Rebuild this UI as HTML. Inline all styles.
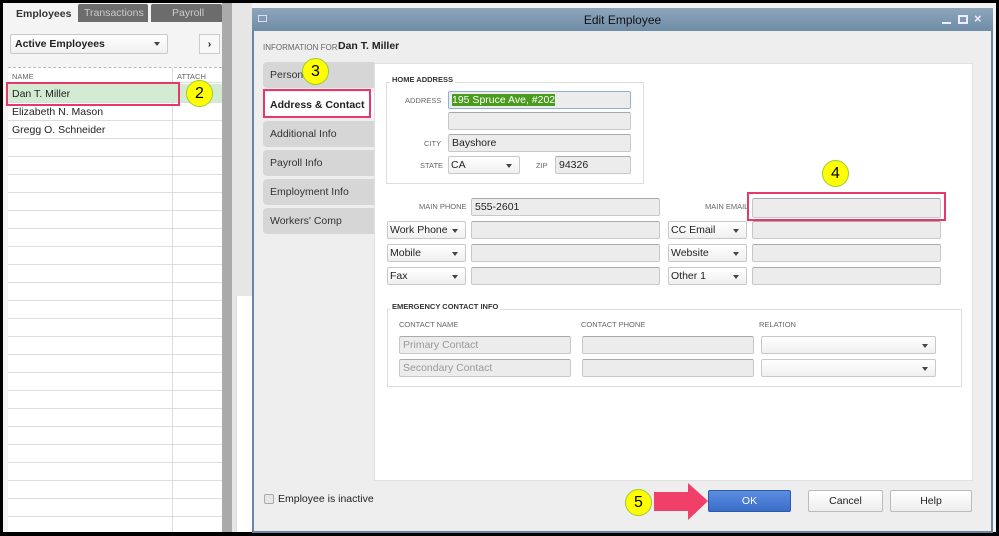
<!DOCTYPE html><html><head><style>
*{box-sizing:border-box;margin:0;padding:0}
body{width:999px;height:536px;overflow:hidden;background:#000;font-family:"Liberation Sans",sans-serif;font-size:10.5px;color:#222;position:relative;white-space:nowrap}
.a{position:absolute}
.inp{position:absolute;background:#ececec;border:1px solid #c8c8c8;border-top-color:#aaa;border-radius:2px;font-size:10.5px;padding:2px 3px;height:18px;overflow:hidden}
.dd{position:absolute;background:linear-gradient(#fff,#f0f0f0);border:1px solid #c8c8c8;border-radius:2px;font-size:10.5px;padding:2px 2px;height:18px}
.dd:after{content:"";position:absolute;right:7px;top:7px;border:3px solid transparent;border-top:4px solid #444}
.lbl{position:absolute;font-size:7.5px;color:#666;}
.tab{position:absolute;left:263px;width:111px;height:26px;background:#d6d6d6;border-radius:4px 0 0 4px;padding:7px 7px;font-size:10.5px;color:#333}
.c{position:absolute;width:27px;height:27px;border-radius:50%;background:#ff0;border:1px solid #9c3;font-size:16px;text-align:center;line-height:26px;color:#000}
.btn{position:absolute;height:22px;top:490px;border:1px solid #bbb;border-radius:2px;background:linear-gradient(#fff,#eee);text-align:center;line-height:20px;font-size:10.5px}
</style></head><body>
<div class="a" style="left:3px;top:3px;width:993px;height:529px;background:#f2f2f2"></div>
<div class="a" style="left:3px;top:3px;width:219px;height:529px;background:#f4f4f4"></div>
<div class="a" style="left:8px;top:4px;width:68px;height:19px;background:#f4f4f4;font-weight:bold;color:#333;padding:4px 8px">Employees</div>
<div class="a" style="left:78px;top:4px;width:70px;height:18px;background:#6c6c6c;color:#ccc;padding:3px 6px;border-radius:2px 2px 0 0">Transactions</div>
<div class="a" style="left:151px;top:4px;width:71px;height:18px;background:#6c6c6c;color:#ccc;padding:3px 21px;border-radius:2px 2px 0 0">Payroll</div>
<div class="dd" style="left:10px;top:34px;width:158px;height:20px;font-weight:bold;padding:3px 4px">Active Employees</div>
<div class="a" style="left:199px;top:34px;width:21px;height:20px;border:1px solid #ccc;background:#f8f8f8;text-align:center;font-weight:bold;line-height:18px">›</div>
<div class="a" style="left:8px;top:67px;width:214px;height:465px;background:repeating-linear-gradient(#fff 0,#fff 17px,#ddd 17px,#ddd 18px);background-position:0 17px;border-top:1px dashed #bbb"></div>
<div class="a" style="left:8px;top:68px;width:214px;height:15px;background:#fff;border-bottom:1px solid #ddd"></div>
<div class="a" style="left:172px;top:68px;width:1px;height:464px;background:#ddd"></div>
<div class="lbl" style="left:12px;top:72px">NAME</div><div class="lbl" style="left:177px;top:72px">ATTACH</div>
<div class="a" style="left:8px;top:84px;width:214px;height:18px;background:#d3ead3"></div>
<div class="a" style="left:12px;top:88px">Dan T. Miller</div>
<div class="a" style="left:12px;top:106px">Elizabeth N. Mason</div>
<div class="a" style="left:12px;top:124px">Gregg O. Schneider</div>
<div class="a" style="left:6px;top:82px;width:174px;height:24px;border:2px solid #e8386a"></div>
<div class="a" style="left:222px;top:3px;width:10px;height:529px;background:#aaa"></div>
<div class="a" style="left:232px;top:3px;width:20px;height:529px;background:#e6e6e6"></div>
<div class="a" style="left:236px;top:296px;width:16px;height:236px;background:#fff;border-left:1px solid #ddd"></div>
<div class="c" style="left:186px;top:80px">2</div>
<div class="a" style="left:252px;top:8px;width:741px;height:525px;background:#eeeeee;border:1px solid #6a87a2;border-width:0 2px 2px 2px"></div>
<div class="a" style="left:252px;top:8px;width:741px;height:23px;background:linear-gradient(#8da6bc,#6f8ca6)"></div>
<div class="a" style="left:258px;top:15px;width:9px;height:7px;border:1px solid #dde;"></div>
<div class="a" style="left:252px;top:13px;width:741px;text-align:center;font-size:12px;color:#111">Edit Employee</div>
<div class="a" style="left:942px;top:22px;width:9px;height:2px;background:#eef"></div>
<div class="a" style="left:958px;top:15px;width:10px;height:9px;border:2px solid #eef;border-top-width:2px"></div>
<div class="a" style="left:974px;top:11px;color:#eef;font-size:13px;font-weight:bold">×</div>
<div class="a" style="left:263px;top:43px;font-size:8px;color:#666">INFORMATION FOR</div>
<div class="a" style="left:338px;top:40px;font-weight:bold;font-size:10.5px">Dan T. Miller</div>
<div class="tab" style="top:62px">Personal</div>
<div class="tab" style="top:92px;background:#fff;font-weight:bold;color:#222">Address &amp; Contact</div>
<div class="tab" style="top:121px">Additional Info</div>
<div class="tab" style="top:150px">Payroll Info</div>
<div class="tab" style="top:179px">Employment Info</div>
<div class="tab" style="top:208px">Workers' Comp</div>
<div class="a" style="left:374px;top:63px;width:599px;height:418px;background:#fff;border:1px solid #e0e0e0"></div>
<div class="a" style="left:263px;top:89px;width:108px;height:29px;border:2px solid #e8386a"></div>
<div class="c" style="left:302px;top:58px">3</div>
<div class="a" style="left:386px;top:82px;width:258px;height:102px;border:1px solid #ddd"></div>
<div class="a" style="left:390px;top:75px;background:#fff;font-size:7.5px;font-weight:bold;color:#333;padding:0 2px">HOME ADDRESS</div>
<div class="lbl" style="left:405px;top:96px">ADDRESS</div>
<div class="inp" style="left:448px;top:91px;width:183px;border-color:#8eb0d6"><span style="background:#4a9a1c;color:#fff">195 Spruce Ave, #202</span></div>
<div class="inp" style="left:448px;top:112px;width:183px"></div>
<div class="lbl" style="left:424px;top:139px">CITY</div>
<div class="inp" style="left:448px;top:134px;width:183px">Bayshore</div>
<div class="lbl" style="left:420px;top:161px">STATE</div>
<div class="dd" style="left:448px;top:156px;width:72px">CA</div>
<div class="lbl" style="left:536px;top:161px">ZIP</div>
<div class="inp" style="left:555px;top:156px;width:76px">94326</div>
<div class="lbl" style="left:419px;top:202px">MAIN PHONE</div>
<div class="inp" style="left:471px;top:198px;width:189px">555-2601</div>
<div class="lbl" style="left:705px;top:202px">MAIN EMAIL</div>
<div class="inp" style="left:752px;top:198px;width:189px;height:20px"></div>
<div class="a" style="left:747px;top:192px;width:199px;height:29px;border:2px solid #e8386a"></div>
<div class="c" style="left:822px;top:160px">4</div>
<div class="dd" style="left:387px;top:221px;width:79px">Work Phone</div><div class="inp" style="left:471px;top:221px;width:189px"></div>
<div class="dd" style="left:668px;top:221px;width:79px">CC Email</div><div class="inp" style="left:752px;top:221px;width:189px"></div>
<div class="dd" style="left:387px;top:244px;width:79px">Mobile</div><div class="inp" style="left:471px;top:244px;width:189px"></div>
<div class="dd" style="left:668px;top:244px;width:79px">Website</div><div class="inp" style="left:752px;top:244px;width:189px"></div>
<div class="dd" style="left:387px;top:267px;width:79px">Fax</div><div class="inp" style="left:471px;top:267px;width:189px"></div>
<div class="dd" style="left:668px;top:267px;width:79px">Other 1</div><div class="inp" style="left:752px;top:267px;width:189px"></div>
<div class="a" style="left:387px;top:309px;width:575px;height:78px;border:1px solid #ddd"></div>
<div class="a" style="left:390px;top:302px;background:#fff;font-size:7.5px;font-weight:bold;color:#333;padding:0 2px">EMERGENCY CONTACT INFO</div>
<div class="lbl" style="left:399px;top:320px">CONTACT NAME</div>
<div class="lbl" style="left:581px;top:320px">CONTACT PHONE</div>
<div class="lbl" style="left:759px;top:320px">RELATION</div>
<div class="inp" style="left:399px;top:336px;width:172px;color:#999">Primary Contact</div>
<div class="inp" style="left:582px;top:336px;width:172px"></div>
<div class="dd" style="left:761px;top:336px;width:175px"></div>
<div class="inp" style="left:399px;top:359px;width:172px;color:#999">Secondary Contact</div>
<div class="inp" style="left:582px;top:359px;width:172px"></div>
<div class="dd" style="left:761px;top:359px;width:175px"></div>
<div class="a" style="left:264px;top:494px;width:10px;height:10px;border:1px solid #aaa;border-radius:2px;background:#e6e6e6"></div>
<div class="a" style="left:278px;top:493px">Employee is inactive</div>
<div class="btn" style="left:708px;width:83px;background:linear-gradient(#5b8de0,#3a6dc8);border-color:#2d5aa8;color:#fff">OK</div>
<div class="btn" style="left:808px;width:75px">Cancel</div>
<div class="btn" style="left:890px;width:82px">Help</div>
<div class="c" style="left:625px;top:489px">5</div>
<svg class="a" style="left:654px;top:483px" width="54" height="37"><polygon points="0,9 34,9 34,0 54,18 34,37 34,28 0,28" fill="#f0406a"/></svg>
</body></html>
